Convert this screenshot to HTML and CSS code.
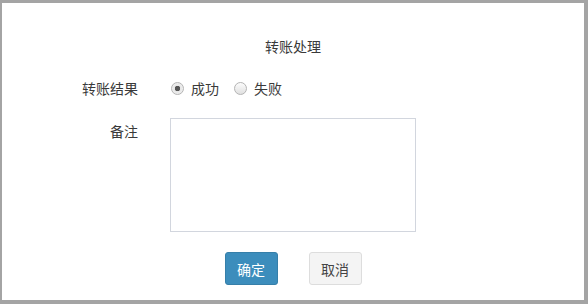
FILE: index.html
```html
<!DOCTYPE html>
<html>
<head>
    <meta charset="utf-8">
    <title>转账处理</title>
    <link rel="stylesheet" href="styles.css">
</head>
<body>

    <div class="dlg">
        <h3>转账处理</h3>
        <form class="frm">
            <div class="row">
                <label class="lbl">转账结果</label>
                <div class="ctl radios">
                    <label class="rd"><input type="radio" name="status" value="1" checked />成功</label>
                    <label class="rd"><input type="radio" name="status" value="2" />失败</label>
                </div>
            </div>
            <div class="row">
                <label class="lbl lbl-top">备注</label>
                <div class="ctl">
                    <textarea name="remark"></textarea>
                </div>
            </div>
            <div class="btns">
                <button type="button" class="btn btn-primary">确定</button>
                <button type="button" class="btn btn-default">取消</button>
            </div>
        </form>
    </div>

</body>
</html>
```

FILE: styles.css
```css
html, body {
    margin: 0;
    padding: 0;
    height: 304px;
    overflow: hidden;
}

body {
    background: #a4a4a4;
    font-family: "Noto Sans CJK SC", "Liberation Sans", sans-serif;
    font-size: 14px;
    color: #3a3a3a;
}

.dlg {
    background: #fff;
    margin: 3px 4px 0 2px;
    width: 582px;
    height: 297px;
    box-sizing: border-box;
    padding-top: 33px;
}

h3 {
    margin: 0;
    font-size: 14px;
    font-weight: normal;
    line-height: 20px;
    text-align: center;
}

.frm {
    margin: 22px 0 0;
}

.row {
    display: flex;
    gap: 32px;
    margin-bottom: 20px;
}

.lbl {
    width: 136px;
    text-align: right;
    line-height: 20px;
}

.lbl-top {
    padding-top: 3px;
}

.radios {
    display: flex;
    gap: 14px;
    line-height: 20px;
}

.rd {
    display: flex;
    align-items: center;
    gap: 7px;
}

.rd input {
    appearance: none;
    margin: 0 0 0 1px;
    width: 13px;
    height: 13px;
    border: 1px solid #b4b4b4;
    border-radius: 50%;
    background: linear-gradient(#fcfcfc, #e0e0e0);
    box-sizing: border-box;
}

.rd input:checked {
    background: radial-gradient(circle, #555 0, #555 2.5px, #e6e6e6 3px, #f4f4f4 100%);
}

textarea {
    display: block;
    width: 246px;
    height: 114px;
    margin: 0;
    border: 1px solid #d2d6de;
    box-sizing: border-box;
    resize: none;
}

.btns {
    display: flex;
    justify-content: center;
    gap: 31px;
    margin-top: 0;
}

.btn {
    width: 53px;
    height: 33px;
    border-radius: 3px;
    font-family: inherit;
    font-size: 14px;
    padding: 0;
    cursor: pointer;
}

.btn-primary {
    background: #3c8dbc;
    border: 1px solid #367fa9;
    color: #fff;
}

.btn-default {
    background: #f4f4f4;
    border: 1px solid #ddd;
    color: #444;
}
```
